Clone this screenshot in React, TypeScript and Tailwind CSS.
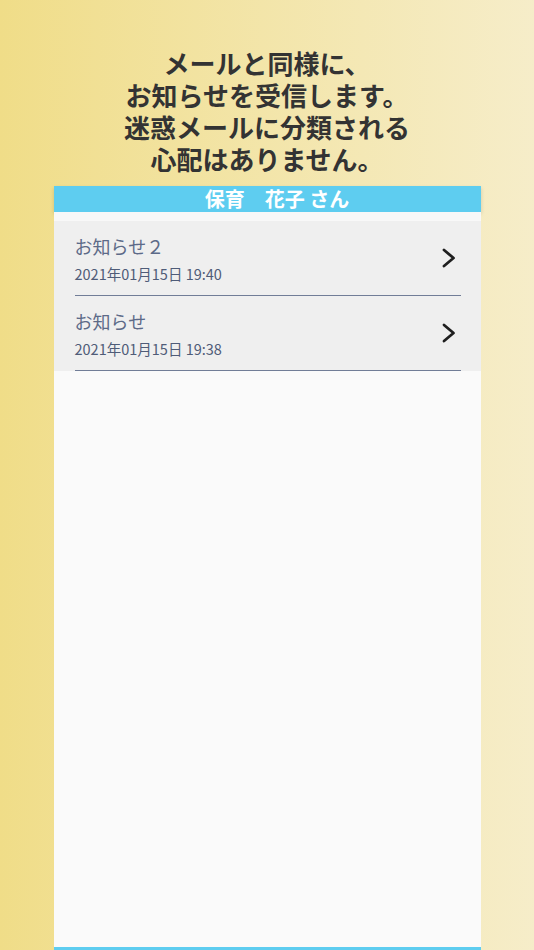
const notices = [
  { title: 'お知らせ２', date: '2021年01月15日 19:40' },
  { title: 'お知らせ', date: '2021年01月15日 19:38' },
]

const lines = ['メールと同様に、', 'お知らせを受信します。', '迷惑メールに分類される', '心配はありません。']

function Chevron() {
  return (
    <svg viewBox="0 0 16 22" className="mr-[4px] h-[22px] w-[16px]" fill="none">
      <polyline points="3,3 12.5,11 3,19" stroke="#1f1f1f" strokeWidth="2.8" strokeLinecap="round" strokeLinejoin="round" />
    </svg>
  )
}

export default function App() {
  return (
    <div
      className="flex min-h-screen flex-col items-center bg-gradient-to-r from-[#f0dd88] to-[#f6edc9]"
      style={{ fontFamily: '"Noto Sans CJK JP", "Noto Sans", sans-serif' }}
    >
      <div className="pt-[47px] pb-[11px] text-center text-[26px] font-bold leading-[32px] text-[#333333]">
        {lines.map((l) => (
          <div key={l}>{l}</div>
        ))}
      </div>

      <div className="flex w-[427px] flex-1 flex-col border-b-[3px] border-[#5ecdf0] bg-[#fafafa]">
        <div className="h-[26px] bg-[#5ecdf0] pl-[20px] text-center text-[20px] font-bold leading-[26px] text-white shadow-[0_2px_4px_rgba(0,0,0,0.15)]">
          保育　花子 さん
        </div>
        <div className="h-[9px] bg-[#f8f8f8]" />
        <ul className="bg-[#efefef]">
          {notices.map((n) => (
            <li
              key={n.date}
              className="ml-[21px] mr-[20px] flex h-[75px] items-center border-b-[1.5px] border-[#717d97]"
            >
              <div className="flex-1 pt-[1px]">
                <div className="text-[18px] leading-6 text-[#5d6a88]">{n.title}</div>
                <div className="mt-[6px] text-[14.5px] leading-5 text-[#4f5c78]">{n.date}</div>
              </div>
              <Chevron />
            </li>
          ))}
        </ul>
      </div>
    </div>
  )
}
